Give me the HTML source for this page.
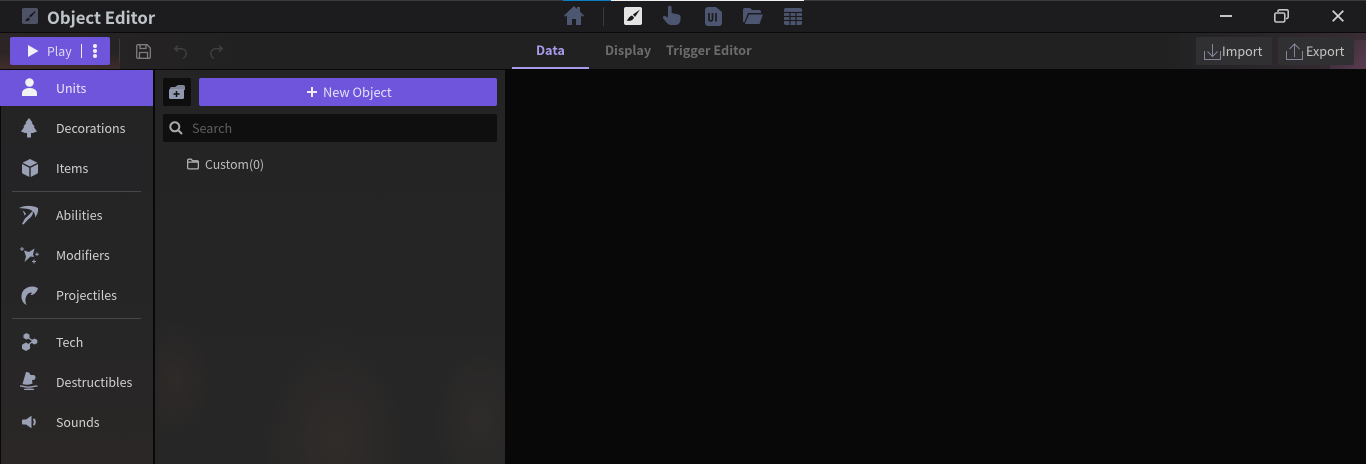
<!DOCTYPE html>
<html><head><meta charset="utf-8"><style>
html,body{margin:0;padding:0;width:1366px;height:464px;overflow:hidden;background:#000}
body{position:relative;font-family:"Noto Sans CJK SC","Liberation Sans",sans-serif;font-size:12.600px;color:#d0d0d0}
.a{position:absolute}
.t{position:absolute;white-space:nowrap;line-height:18px}
svg{position:absolute;overflow:visible}
.nav{left:56px;color:#cfcfcf;font-size:12.450px}
.hr{position:absolute;left:12px;width:129px;height:1px;background:#47474a}
.tab{font-weight:700;font-size:12.700px;color:#6c6c6c;top:41px}
</style></head><body>
<div class="a" style="left:0;top:0;width:1366px;height:1px;background:#3a3a3a"></div>
<div class="a" style="left:563px;top:0;width:48px;height:1px;background:#0a7ec0"></div>
<div class="a" style="left:611px;top:0;width:193px;height:1px;background:#f0f0f0"></div>
<div class="a" style="left:0;top:1px;width:1366px;height:31px;background:#1c1c1e"></div>
<div class="a" style="left:0;top:32px;width:1366px;height:1px;background:#0a0a0a"></div>
<div class="a" style="left:0;top:33px;width:1366px;height:36px;background:linear-gradient(90deg,#2d2525 0,#262324 8%,#212122 18%,#212122 85%,#29262a 92%,#3a2c34 100%)"></div>
<div class="a" style="left:0;top:52px;width:120px;height:17px;background:linear-gradient(180deg,rgba(80,50,45,0),rgba(90,55,50,.45))"></div>
<div class="a" style="left:1330px;top:40px;width:36px;height:29px;background:linear-gradient(135deg,rgba(80,50,70,0),rgba(110,70,100,.6))"></div>
<div class="a" style="left:0;top:69px;width:1366px;height:395px;background:#080808"></div>

<svg style="left:22px;top:8px" width="16" height="16" viewBox="0 0 16 16"><rect width="16" height="16" rx="2" fill="#4d5266"/><path d="M13 3 7 8l1.500 1.500L13.500 4zM6 9.500 8 11c-1 2-3 2.500-5 2 1-.8 1.500-2.500 3-3.500z" fill="#17171a"/></svg>
<div class="t" style="left:47px;top:6px;font-size:16.700px;line-height:22px;font-weight:700;color:#bfc4c9">Object Editor</div>

<svg style="left:564px;top:6px" width="20" height="19" viewBox="0 0 20 19"><path d="M10 0 0 9.500 1.300 10.800 3 9.300V19h5v-6h4v6h5V9.300l1.700 1.500L20 9.500 16 5.700V1h-3v2z" fill="#4d5670"/></svg>
<div class="a" style="left:603px;top:7px;width:1px;height:19px;background:#3b3b3d"></div>
<svg style="left:624px;top:7px" width="18" height="18" viewBox="0 0 18 18"><rect width="18" height="18" rx="2" fill="#e4e4e4"/><path d="M16 2.500 9 7.500 11 10zM8 8.500 10 10.500c-1 3-4 4-7.500 3 2-1 2-4 5.500-5z" fill="#161616"/></svg>
<svg style="left:663px;top:6px" width="18" height="19" viewBox="0 0 18 19"><path d="M5 1.500a1.800 1.800 0 0 1 3.600 0V7l7 1.500c1.500.5 2 1.300 2 3 0 4-1 7.500-5 7.500H8C5 19 3 16 0 12c-.5-1 .8-2.500 2-2l3 1.500z" fill="#4d5670"/></svg>
<svg style="left:705px;top:7px" width="17" height="19" viewBox="0 0 17 19"><path d="M3 0h8l6 5v11a3 3 0 0 1-3 3H3a3 3 0 0 1-3-3V3a3 3 0 0 1 3-3z" fill="#4d5670"/><path d="M4 6v6.500c0 2 3.500 2 3.500 0V6M11 6v8.500" fill="none" stroke="#1c1c1e" stroke-width="1.700"/></svg>
<svg style="left:743px;top:8px" width="20" height="16" viewBox="0 0 20 16"><path d="M0 14V2a2 2 0 0 1 2-2h5l2 2h7a2 2 0 0 1 2 2v1H5L1.500 14z" fill="#4d5670"/><path d="M6 6.500h14L16.500 16H1.800z" fill="#4d5670"/></svg>
<svg style="left:784px;top:8px" width="18" height="17" viewBox="0 0 18 17"><rect width="18" height="17" rx="2" fill="#4d5670"/><path d="M0 4.500h18M0 8.500h18M0 12.500h18M6 4.500V17M12 4.500V17" stroke="#1c1c1e" stroke-width="1.200"/></svg>

<div class="a" style="left:1220px;top:15px;width:12px;height:2px;background:#c4c4c4"></div>
<svg style="left:1274px;top:9px" width="15" height="14" viewBox="0 0 15 14" fill="none" stroke="#c4c4c4" stroke-width="1.600"><rect x=".8" y="4" width="10" height="9" rx="1.500"/><path d="M4 3V2.300A1.500 1.500 0 0 1 5.500.8h7.200A1.500 1.500 0 0 1 14.200 2.300V8a1.500 1.500 0 0 1-1.500 1.500H12"/></svg>
<svg style="left:1332px;top:10px" width="12" height="12" viewBox="0 0 12 12"><path d="M.7.700 11.300 11.300M11.300.700.7 11.300" stroke="#d0d0d0" stroke-width="1.800"/></svg>

<div class="a" style="left:10px;top:37px;width:100px;height:28px;background:#6e55dc;border-radius:2px"></div>
<svg style="left:28px;top:45px" width="11" height="12" viewBox="0 0 11 12"><path d="M0 0 10.500 6 0 12z" fill="#f0f0f5"/></svg>
<div class="t" style="left:47px;top:42px;color:#dcd8f2;font-size:12.300px">Play</div>
<div class="a" style="left:81px;top:44px;width:1px;height:14px;background:#ece9fa"></div>
<div class="a" style="left:93px;top:44px;width:4px;height:4px;border-radius:50%;background:#eee"></div>
<div class="a" style="left:93px;top:49px;width:4px;height:4px;border-radius:50%;background:#eee"></div>
<div class="a" style="left:93px;top:54px;width:4px;height:4px;border-radius:50%;background:#eee"></div>
<div class="a" style="left:119px;top:39px;width:1px;height:24px;background:#3b3a3a"></div>
<svg style="left:136px;top:44px" width="15" height="15" viewBox="0 0 15 15" fill="none" stroke="#7d7d7d" stroke-width="1.300"><path d="M.7 2a1.300 1.300 0 0 1 1.300-1.300h9l3.300 3.300v9a1.300 1.300 0 0 1-1.300 1.300H2A1.300 1.300 0 0 1 .7 13z"/><path d="M4 1v3.500h6V1M3.500 14V8.500h8V14"/></svg>
<svg style="left:174px;top:45px" width="14" height="14" viewBox="0 0 14 14" fill="none" stroke="#3f3f3f" stroke-width="1.500"><path d="M4 .7.800 3.700 4 6.700M1 3.700h7a5 5 0 0 1 1 9.600"/></svg>
<svg style="left:209px;top:45px" width="14" height="14" viewBox="0 0 14 14" fill="none" stroke="#3f3f3f" stroke-width="1.500"><path d="M10 .7l3.200 3L10 6.700M13 3.700H6a5 5 0 0 0-1 9.600"/></svg>

<div class="t tab" style="left:536px;color:#a99bea">Data</div>
<div class="a" style="left:512px;top:67px;width:77px;height:2px;background:#a99bea"></div>
<div class="t tab" style="left:605px">Display</div>
<div class="t tab" style="left:666px">Trigger Editor</div>

<div class="a" style="left:1196px;top:37px;width:76px;height:28px;background:#303032;border-radius:2px"></div>
<div class="a" style="left:1278px;top:37px;width:76px;height:28px;background:#303032;border-radius:2px"></div>
<svg style="left:1204px;top:43px" width="17" height="17" viewBox="0 0 17 17" fill="none" stroke="#83869a" stroke-width="1"><path d="M.5 8v8.500h16V8M8.500 1v12M3.500 8.500l5 5 5-5"/></svg>
<div class="t" style="left:1222px;top:42px;color:#c4c4c4">Import</div>
<svg style="left:1286px;top:43px" width="17" height="17" viewBox="0 0 17 17" fill="none" stroke="#83869a" stroke-width="1"><path d="M.5 8v8.500h16V8M8.500 14V1M3.500 6l5-5 5 5"/></svg>
<div class="t" style="left:1306px;top:42px;color:#c4c4c4">Export</div>

<div class="a" style="left:1px;top:70px;width:152px;height:394px;background:linear-gradient(180deg,#242425 0,#252526 50%,#2a2726 100%)"></div>
<div class="a" style="left:155px;top:70px;width:350px;height:394px;background:radial-gradient(ellipse 75px 110px at 180px 370px,#312c2a,rgba(49,44,42,0)),radial-gradient(ellipse 40px 60px at 20px 310px,#2f2a28,rgba(47,42,40,0)),radial-gradient(ellipse 50px 80px at 325px 350px,#2f2c2a,rgba(47,44,42,0)),linear-gradient(180deg,#242425 0,#262626 100%)"></div>

<div class="a" style="left:0;top:70px;width:153px;height:36px;background:#6e55dc"></div>
<svg style="left:22px;top:78px" width="15" height="18" viewBox="0 0 15 18"><circle cx="7.500" cy="4.500" r="4.300" fill="#f2f2f2"/><path d="M0 18v-2.500C0 12 3 10 7.500 10s7.500 2 7.500 5.500V18z" fill="#f2f2f2"/></svg>
<div class="t nav" style="top:79px;color:#eeeafa">Units</div>

<svg style="left:21px;top:118px" width="16" height="20" viewBox="0 0 16 20"><path d="M8 0l3.500 4.500-.8.500 3 3.500-.9.500L16 13.500 12 15H10v4.500H6V15H4L0 13.500 3.200 9l-.9-.5L5.300 5l-.8-.5z" fill="#9aa0b6"/></svg>
<div class="t nav" style="top:119px">Decorations</div>
<svg style="left:22px;top:159px" width="16" height="18" viewBox="0 0 16 18"><path d="M8 0 15.500 3.700 8 7.500.5 3.700zM0 5l7.300 3.700V18L1.500 15A2 2 0 0 1 0 13zM16 5 8.700 8.700V18l5.800-3A2 2 0 0 0 16 13z" fill="#9aa0b6"/></svg>
<div class="t nav" style="top:159px">Items</div>
<div class="hr" style="top:191px"></div>

<svg style="left:19px;top:205px" width="20" height="20" viewBox="0 0 20 20" fill="#9aa0b6"><path d="M0 3C5 .5 13 0 19 3c.5 4-1 7-3 9.500C16.500 8.500 14 5.500 10 4.300 7 3.500 3 3.300 0 3z"/><path d="M13.500 6c1.500 3-1.500 6.500-4.500 8.500L4.500 19.500 3 19l3-5.500c2.500-2 5-5 7.500-7.500z"/><path d="M3.500 5.500c1.500 1 3 2 3.500 3.500L5.500 10.500C5 8.500 4.500 7 3.500 5.500z"/></svg>
<div class="t nav" style="top:206px">Abilities</div>
<svg style="left:20px;top:246px" width="19" height="19" viewBox="0 0 19 19"><path d="M4 4.500l5 1.500 5.500-3.500-1.500 6 1 2.500-3.500-.5L4.500 16 6 10.500z" fill="#9aa0b6"/><path d="M2 1v4M0 3h4M17 6.500v3.500M15.200 8.200h3.600M14 13.500v4M12 15.500h4" stroke="#9aa0b6" stroke-width="1"/></svg>
<div class="t nav" style="top:246px">Modifiers</div>
<svg style="left:21px;top:286px" width="17" height="19" viewBox="0 0 17 19"><path d="M17 2.500C14-.5 6-.5 2 5c-3 5-1.500 11.500 3.500 14-1.500-3.500-1.500-7 .5-10 1.200-1.800 3-2.800 5-2.300L9.500 9c3 .5 6-2.500 7.500-6.500z" fill="#9aa0b6"/></svg>
<div class="t nav" style="top:286px">Projectiles</div>
<div class="hr" style="top:318px"></div>

<svg style="left:21px;top:333px" width="17" height="18" viewBox="0 0 17 18"><path d="M6 4l6 4M6 13l6-5" stroke="#9aa0b6" stroke-width="1.200"/><path d="M5.500 0l3 1.700v3.200l-3 1.700-3-1.700V1.700zM13.500 5.500l2.800 1.500v3l-2.800 1.500L10.700 10V7zM5 9.500l4 2.200v4L5 18l-4-2.300v-4z" fill="#9aa0b6"/></svg>
<div class="t nav" style="top:333px">Tech</div>
<svg style="left:20px;top:372px" width="18" height="18" viewBox="0 0 18 18"><path d="M6 0c2 0 3.500.5 4 2l.5 1h2.500c1.500 0 2.500 1 2.500 2.500S14.500 8 13 8h-1l.5 3.500c-3 1.500-7 1.500-10 .5z" fill="#9aa0b6"/><path d="M0 13.500c3-.5 4 1 8.500 1s6-1.500 9-1v1.300c-3-.5-4 1-9 1s-6-1.500-8.500-1zM4 17c3-.7 7-.7 10 0v1H4z" fill="#9aa0b6"/></svg>
<div class="t nav" style="top:373px">Destructibles</div>
<svg style="left:22px;top:416px" width="15" height="12" viewBox="0 0 15 12"><path d="M0 4.500Q0 3.500 1 3.500h3L9 0h.5v12H9L4 8.500H1Q0 8.500 0 7.500z" fill="#9aa0b6"/><path d="M11.500 3c1.700 1.500 1.700 4.500 0 6" fill="none" stroke="#9aa0b6" stroke-width="2"/></svg>
<div class="t nav" style="top:413px">Sounds</div>

<div class="a" style="left:163px;top:78px;width:28px;height:28px;background:#0e0e0e;border-radius:2px"></div>
<svg style="left:169px;top:85px" width="16" height="14" viewBox="0 0 16 14"><path d="M1 5V3.500A1.500 1.500 0 0 1 2.500 2H6l3-2h5a2 2 0 0 1 2 2v3z" fill="#7f8496"/><rect y="4" width="15" height="10" rx="1.500" fill="#9298ad"/><path d="M7.500 6v6M4.500 9h6" stroke="#0e0e0e" stroke-width="1.500"/></svg>
<div class="a" style="left:199px;top:78px;width:298px;height:28px;background:#6e55dc;border-radius:2px"></div>
<svg style="left:307px;top:87px" width="10" height="10" viewBox="0 0 10 10"><path d="M5 0v10M0 5h10" stroke="#eee" stroke-width="2"/></svg>
<div class="t" style="left:323px;top:83px;color:#e4e0f6;font-size:12.800px">New Object</div>

<div class="a" style="left:163px;top:114px;width:334px;height:28px;background:#0f0f0f;border-radius:2px"></div>
<svg style="left:169px;top:121px" width="14" height="14" viewBox="0 0 14 14" fill="none" stroke="#a8a8a8" stroke-width="2"><circle cx="5.800" cy="5.800" r="4.500"/><path d="M9 9l4 4"/></svg>
<div class="t" style="left:192px;top:119px;color:#5e5e5e">Search</div>

<svg style="left:187px;top:158px" width="12" height="12" viewBox="0 0 13 12" fill="none" stroke="#b0b0b0" stroke-width="1.400"><path d="M.7 2a1.200 1.200 0 0 1 1.200-1.200h2.600L6 2.500h5a1.300 1.300 0 0 1 1.300 1.300V10a1.300 1.300 0 0 1-1.300 1.300H2A1.300 1.300 0 0 1 .7 10zM.7 4h11.600"/></svg>
<div class="t" style="left:205px;top:155px;color:#bcbcbc;font-size:12.300px">Custom(0)</div>
</body></html>
